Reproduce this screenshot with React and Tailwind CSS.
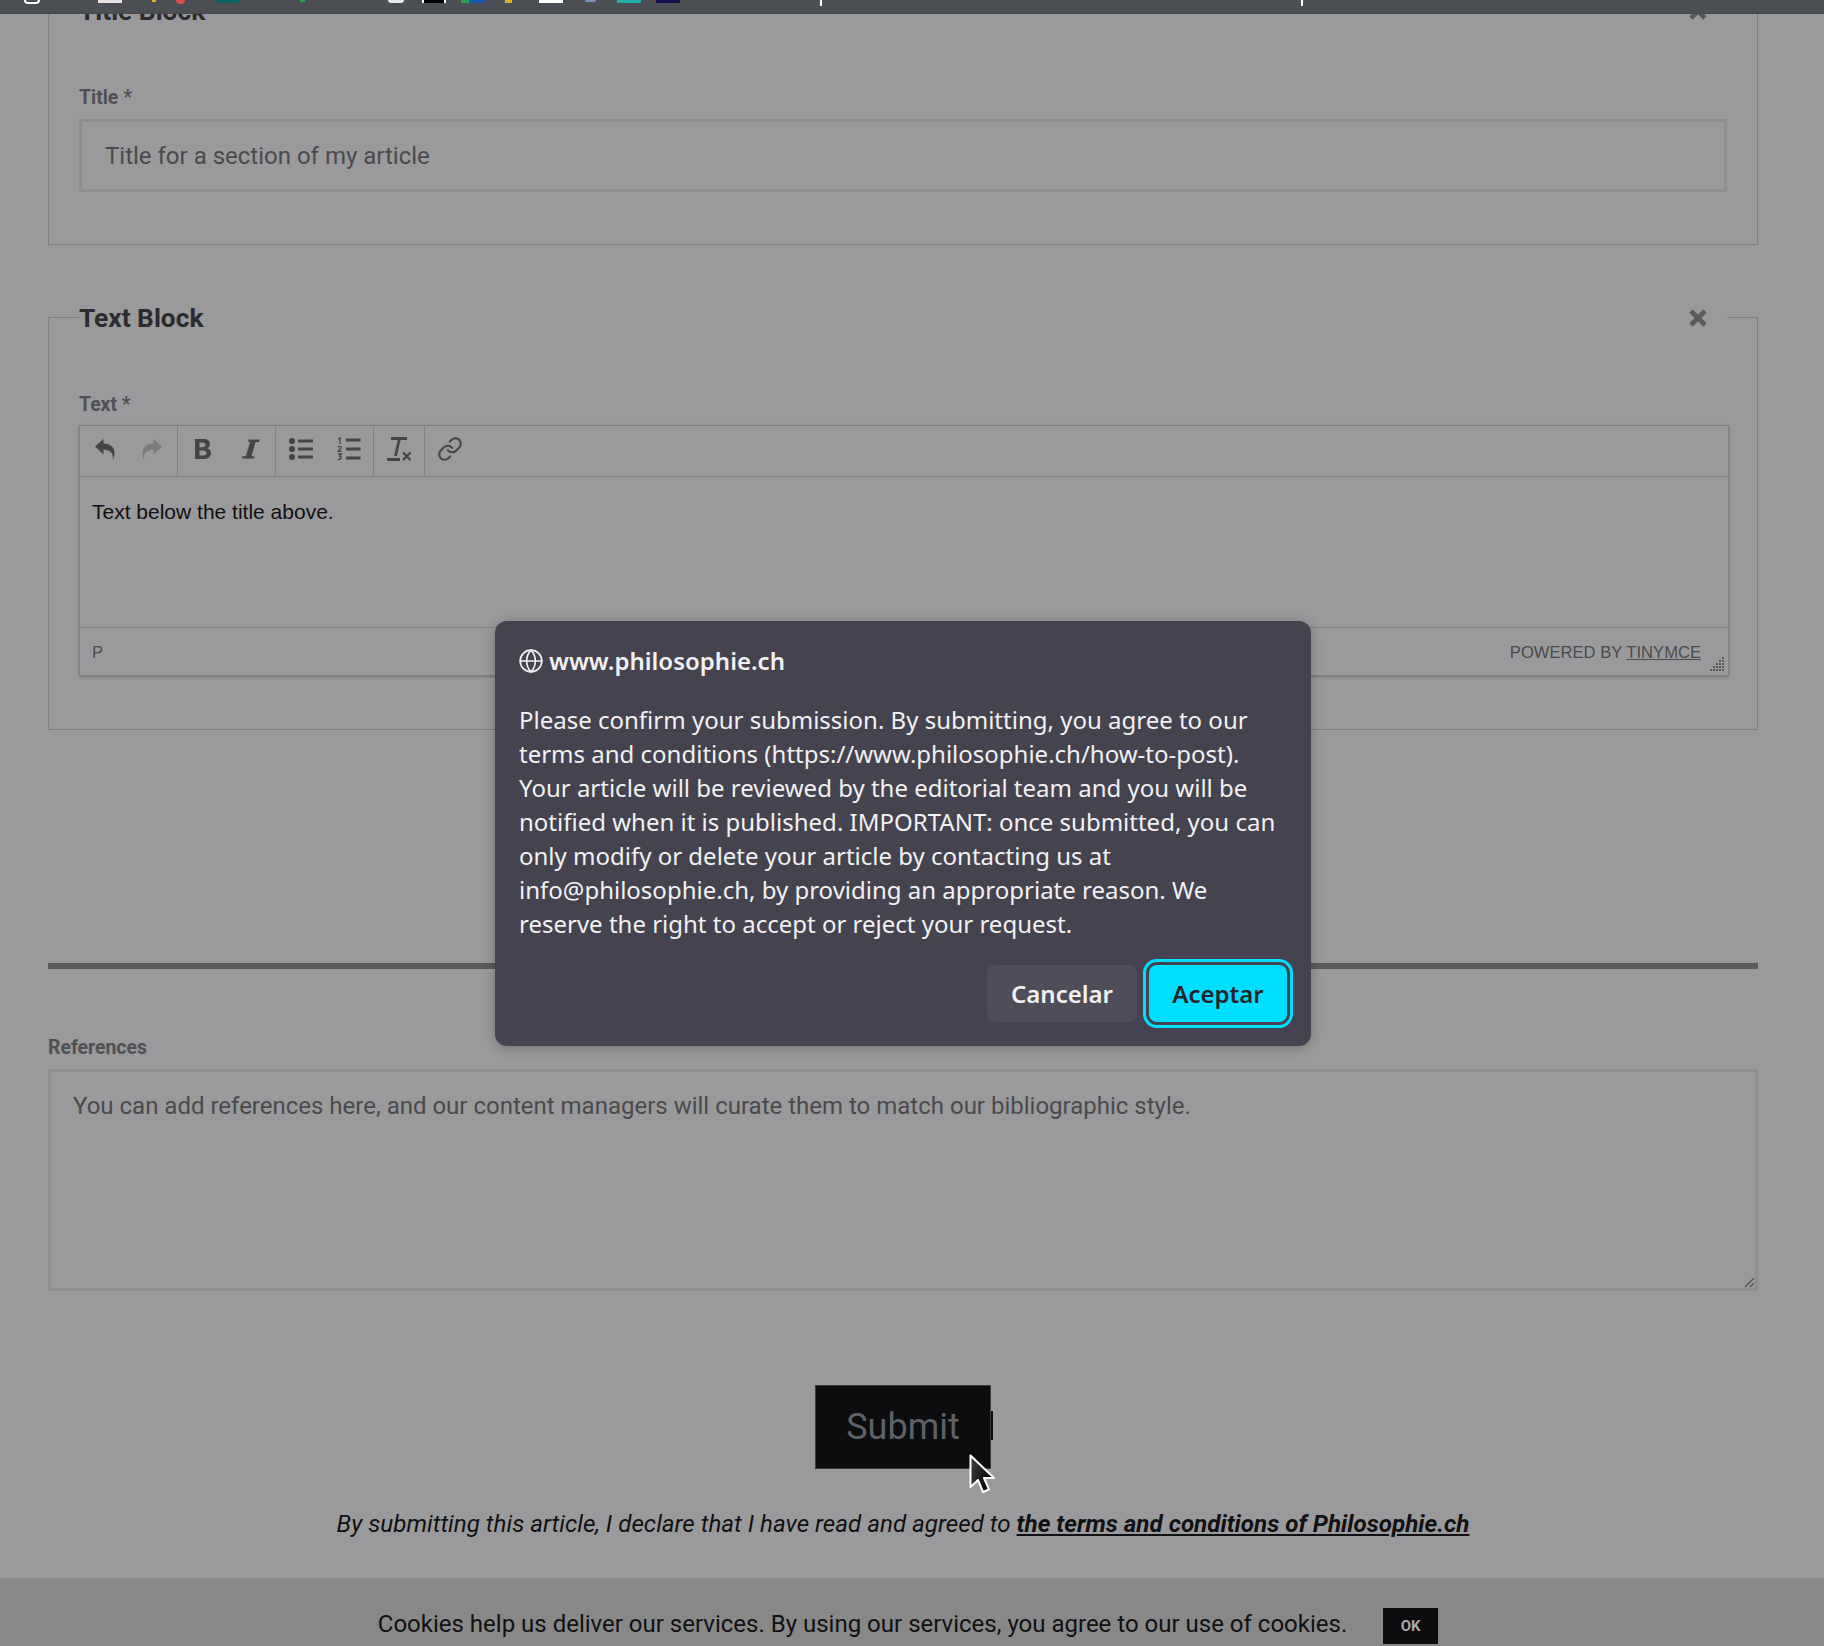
import React from "react";
import { Globe, Link as LinkIcon, X } from "lucide-react";

const Undo = ({ className }) => (
  <svg viewBox="0 0 22 24" className={className} fill="currentColor">
    <path d="M1 9.5 9.5 2v4.6c7 .2 11.6 4 11 10.6-.2 2.2-.9 4.2-2 5.8.3-1.4.5-2.7.3-4-.6-4-3.900-6.300-9.300-6.300V17.500Z" />
  </svg>
);

const Sep = () => <div className="w-px h-full bg-[#828284]" />;

const ToolButton = ({ children, className }) => (
  <div className={"flex items-center justify-center h-full pb-[5px] " + className}>{children}</div>
);

const Fieldset = ({ title, children, className }) => (
  <fieldset className={"border border-[#7f7f81] mx-[48px] w-[1710px] px-[30px] min-w-0 " + className}>
    <legend className="w-[1648px] h-[35px] flex items-center justify-between p-0">
      <span className="text-[26.3px] leading-[36px] font-bold text-[#2c2c2e]">{title}</span>
      <X className="w-[28px] h-[28px] text-[#59595b] mr-[15px]" strokeWidth={4} strokeLinecap="butt" />
    </legend>
    {children}
  </fieldset>
);

const Label = ({ children, className }) => (
  <div className={"h-[24px] pt-[1px] leading-[24px] text-[19.4px] font-bold text-[#505054] " + className}>{children}</div>
);

export default function App() {
  return (
    <div className="relative w-[1824px] h-[1646px] overflow-hidden bg-[#9a9a9c] font-['Roboto',sans-serif]">
      {/* browser strip */}
      <div className="relative z-10 h-[14px] bg-[#4b4e53] border-b border-[#46484d] flex items-start">
        <div className="ml-[24px] w-[16px] h-[4px] rounded-b-[8px] border-x-2 border-b-2 border-white" />
        <div className="ml-[58px] w-[24px] h-[3px] bg-[#e9e4e4]" />
        <div className="ml-[30px] w-[4px] h-[2px] bg-[#e0b020]" />
        <div className="ml-[20px] w-[9px] h-[4px] bg-[#d94f4f] rounded-b" />
        <div className="ml-[31px] w-[23px] h-[3px] bg-[#0e5f66]" />
        <div className="ml-[61px] w-[5px] h-[2px] bg-[#2fa14f]" />
        <div className="ml-[83px] w-[16px] h-[3px] rounded-b-full bg-[#e8e8e8]" />
        <div className="ml-[18px] w-[24px] h-[3px] bg-black border-x-2 border-white" />
        <div className="ml-[15px] w-[24px] h-[3px] bg-[#1557b5] border-l-[8px] border-[#2e9e4f]" />
        <div className="ml-[20px] w-[7px] h-[3px] bg-[#e6b320]" />
        <div className="ml-[27px] w-[24px] h-[3px] bg-white" />
        <div className="ml-[22px] w-[11px] h-[2px] rounded-b-full bg-[#7a93b8]" />
        <div className="ml-[21px] w-[24px] h-[3px] bg-[#1fb0ad]" />
        <div className="ml-[15px] w-[24px] h-[3px] bg-[#12104f]" />
        <div className="ml-[140px] w-[2px] h-[6px] bg-white" />
        <div className="ml-[479px] w-[2px] h-[6px] bg-white" />
      </div>

      <main className="-mt-[21px]">
        <Fieldset title="Title Block" className="pb-[52px]">
          <Label className="mt-[57px] mb-[10px]">Title *</Label>
          <div className="h-[73px] border-[3px] border-[#8e8e90] pl-[23px] flex items-center text-[24px] text-[#4a4a4d]">
            Title for a section of my article
          </div>
        </Fieldset>

        <Fieldset title="Text Block" className="mt-[55px] pb-[53px]">
          <Label className="mt-[57px] mb-[9px]">Text *</Label>
          <div className="w-[1650px] h-[251px] border border-[#7f7f81] shadow-[0_1px_3px_rgba(0,0,0,0.25)] flex flex-col">
            <div className="h-[51px] border-b border-[#7f7f81] flex items-center text-[#454548]">
              <ToolButton className="w-[49px]"><Undo className="w-[22px] h-[24px]" /></ToolButton>
              <ToolButton className="w-[48px] pr-[2px] text-[#7c7c7e]"><Undo className="w-[22px] h-[24px] -scale-x-100" /></ToolButton>
              <Sep />
              <ToolButton className="w-[49px]">
                <svg viewBox="0 0 18 22" className="w-[18px] h-[22px]" fill="currentColor" fillRule="evenodd">
                  <path d="M1 1h8.500c4 0 6.500 1.800 6.500 5 0 2-1.100 3.500-2.900 4.200C15.500 10.800 17 12.500 17 15c0 3.800-2.800 6-7 6H1ZM5.500 4.500v4.700h3.200c1.800 0 2.800-.9 2.800-2.400s-1-2.300-2.800-2.300ZM5.500 12.500v5h3.800c2 0 3.100-.9 3.100-2.500s-1.100-2.500-3.100-2.500Z" />
                </svg>
              </ToolButton>
              <ToolButton className="w-[48px] pr-[2px]">
                <svg viewBox="0 0 20 22" className="w-[19px] h-[22px]" fill="currentColor">
                  <path d="M8 1h11.500l-.4 2.500h-3.700L11 18.500h3.300l-.5 2.500H1l.4-2.500h3.700L9.500 3.500H7.500Z" />
                </svg>
              </ToolButton>
              <Sep />
              <ToolButton className="w-[49px] pl-[2px]">
                <svg viewBox="0 0 26 24" className="w-[26px] h-[24px]" fill="currentColor">
                  <circle cx="3" cy="4" r="3" /><circle cx="3" cy="12" r="3" /><circle cx="3" cy="20" r="3" />
                  <rect x="9" y="2.500" width="15" height="3" /><rect x="9" y="10.500" width="15" height="3" /><rect x="9" y="18.500" width="15" height="3" />
                </svg>
              </ToolButton>
              <ToolButton className="w-[48px]">
                <svg viewBox="0 0 24 24" className="w-[24px] h-[24px]" stroke="currentColor" fill="none">
                  <path strokeWidth="1.300" d="M1 2 3 1v6M1 10.200c1-1.300 3.500-.8 3 .8-.3 1-2.500 2-3 3.300h3.500M1 17h3.300l-1.500 2c2 0 2.200 3.500-2 3.500" />
                  <path strokeWidth="3" d="M9 3h14.500M9 12h14.500M9 21h14.500" />
                </svg>
              </ToolButton>
              <Sep />
              <ToolButton className="w-[50px]">
                <svg viewBox="0 0 26 26" className="w-[26px] h-[26px]" fill="none" stroke="currentColor">
                  <path strokeWidth="2.800" d="M5 2.500h16M13.500 2.500 9.500 20M1 23.500h13" />
                  <path strokeWidth="2.200" d="m17 16.500 7.500 7.500M24.500 16.500 17 24" />
                </svg>
              </ToolButton>
              <Sep />
              <ToolButton className="w-[52px] pr-[2px]">
                <LinkIcon className="w-[26px] h-[26px]" strokeWidth={1.9} />
              </ToolButton>
            </div>
            <div className="h-[151px] border-b border-[#7f7f81] pl-[12px] pt-[21px] font-['Liberation_Sans',sans-serif] text-[21px] leading-[28px] text-[#101012]">
              Text below the title above.
            </div>
            <div className="flex-1 relative flex items-center justify-between pl-[12px] pr-[27px] pt-[3px] font-['Liberation_Sans',sans-serif] text-[16.600px] text-[#4a4a4d]">
              <span>P</span>
              <span>POWERED BY <span className="underline">TINYMCE</span></span>
              <svg viewBox="0 0 15 15" className="absolute right-[4px] bottom-[4px] w-[15px] h-[15px]" fill="#59595b">
                <path d="M13 1h2v2h-2zM13 4h2v2h-2zM10 4h2v2h-2zM13 7h2v2h-2zM10 7h2v2h-2zM7 7h2v2H7zM13 10h2v2h-2zM10 10h2v2h-2zM7 10h2v2H7zM4 10h2v2H4zM13 13h2v2h-2zM10 13h2v2h-2zM7 13h2v2H7zM4 13h2v2H4zM1 13h2v2H1z" />
              </svg>
            </div>
          </div>
        </Fieldset>

        <div className="mx-[48px] w-[1710px] h-[6px] mt-[233px] bg-[#5b5b5d]" />

        <section className="mx-[48px] w-[1710px] mt-[66px]">
          <Label className="mb-[10px]">References</Label>
          <div className="relative h-[222px] border-[3px] border-[#8e8e90] pl-[22px] pt-[19px] text-[24px] leading-[30px] text-[#4a4a4d]">
            You can add references here, and our content managers will curate them to match our bibliographic style.
            <svg viewBox="0 0 12 12" className="absolute right-0 bottom-0 w-[12px] h-[12px]" stroke="#4f4f52" strokeWidth="1.200">
              <path d="M11 2 2 11M11 7l-4 4" />
            </svg>
          </div>
        </section>

        <div className="mx-[48px] w-[1710px] mt-[94px] flex justify-center">
          <div className="relative w-[176px] h-[84px] bg-[#0d0d10] border border-[#3c3c3e] flex items-center justify-center text-[36px] text-[#5e6168]">
            Submit
            <div className="absolute -right-[3px] top-[25px] w-[2px] h-[29px] bg-[#0d0d10]" />
          </div>
        </div>

        <p className="mx-[48px] w-[1710px] mt-[40px] h-[30px] leading-[30px] text-center text-[24.2px] italic text-[#111113]">
          By submitting this article, I declare that I have read and agreed to{" "}
          <span className="font-bold underline">the terms and conditions of Philosophie.ch</span>
        </p>
      </main>

      <div className="absolute left-0 right-0 top-[1578px] bottom-0 bg-[#888889] flex items-start justify-center pr-[8px]">
        <span className="mt-[30px] h-[32px] leading-[32px] text-[24px] text-[#111113]">
          Cookies help us deliver our services. By using our services, you agree to our use of cookies.
        </span>
        <span className="ml-[36px] mt-[30px] w-[55px] h-[36px] bg-[#0d0d10] flex items-center justify-center text-[15px] font-bold text-[#a8a8a8]">OK</span>
      </div>

      {/* confirm dialog */}
      <div role="dialog" className="absolute left-[495px] top-[621px] w-[816px] h-[425px] rounded-[12px] bg-[#45434f] shadow-[0_2px_12px_rgba(0,0,0,0.25)] pl-[24px] pr-[24px] pt-[23px] font-['Noto_Sans',sans-serif] text-[#f1f1f3]">
        <div className="h-[34px] flex items-center gap-[5px] text-[24px] font-semibold">
          <Globe className="w-[26px] h-[26px] -ml-[1px]" strokeWidth={1.5} />
          www.philosophie.ch
        </div>
        <p className="mt-[25px] w-[768px] text-[24px] leading-[34px]">
          Please confirm your submission. By submitting, you agree to our terms and conditions (https://www.philosophie.ch/how-to-post). Your article will be reviewed by the editorial team and you will be notified when it is published. IMPORTANT: once submitted, you can only modify or delete your article by contacting us at info@philosophie.ch, by providing an appropriate reason. We reserve the right to accept or reject your request.
        </p>
        <div className="mt-[24px] flex justify-end gap-[12px]">
          <div className="w-[150px] h-[57px] rounded-[8px] bg-[#4f4d59] flex items-center justify-center text-[24px] font-semibold">Cancelar</div>
          <div className="w-[138px] h-[57px] rounded-[8px] bg-[#00dfff] outline-[3px] outline-offset-[3px] outline-[#00dfff] flex items-center justify-center text-[24px] font-semibold text-[#24232b]">Aceptar</div>
        </div>
      </div>

      {/* mouse pointer */}
      <svg viewBox="0 0 26 40" className="absolute left-[969px] top-[1454px] w-[26px] h-[40px]">
        <defs>
          <linearGradient id="arrow" x1="0" y1="0" x2="1" y2="0.500">
            <stop offset="0" stopColor="#444" />
            <stop offset="1" stopColor="#000" />
          </linearGradient>
        </defs>
        <path d="M1.500 1.500V33l7.500-7 5 12 6-2.500L15 24h10Z" fill="url(#arrow)" stroke="#fff" strokeWidth="2" strokeLinejoin="round" />
      </svg>
    </div>
  );
}
